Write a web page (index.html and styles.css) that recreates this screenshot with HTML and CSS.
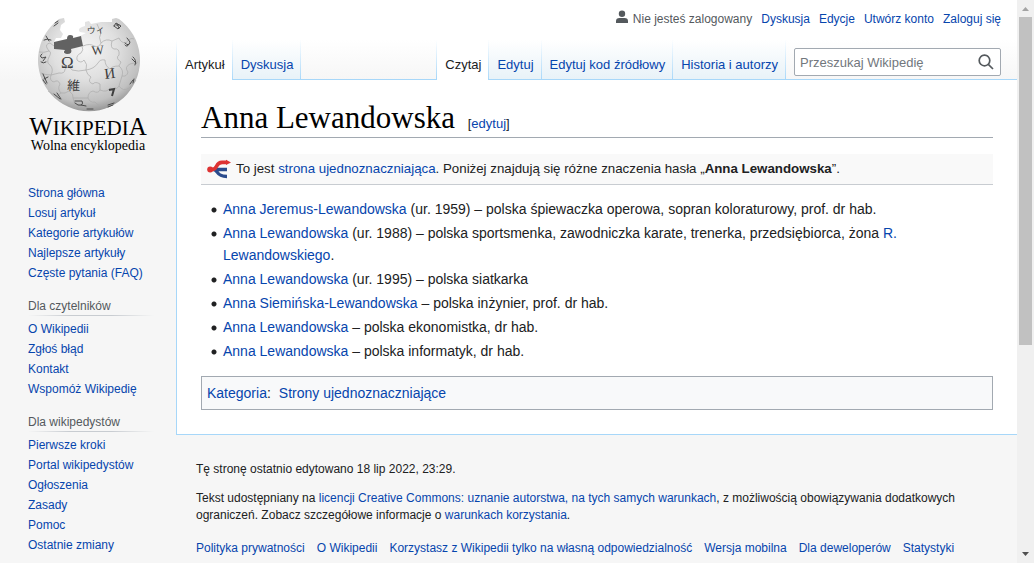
FILE: index.html
```html
<!DOCTYPE html>
<html lang="pl">
<head>
<meta charset="utf-8">
<meta name="viewport" content="width=device-width, initial-scale=1">
<title>Anna Lewandowska – Wikipedia, wolna encyklopedia</title>
<link rel="stylesheet" href="styles.css">
</head>
<body>
<div class="page">
  <aside class="sidebar">
    <a class="logo" href="#" aria-label="Strona główna">
      <svg width="160" height="160" viewBox="0 0 160 160" role="img" aria-label="Wikipedia – Wolna encyklopedia">
        <defs>
          <radialGradient id="globe" cx="0.46" cy="0.34" r="0.7">
            <stop offset="0" stop-color="#f4f4f4"/>
            <stop offset="0.45" stop-color="#e0e0e0"/>
            <stop offset="0.8" stop-color="#c0c0c0"/>
            <stop offset="1" stop-color="#8a8a8a"/>
          </radialGradient>
        </defs>
        <path fill="url(#globe)" d="M59 19L64 18L65 22L61 25L60 30L63 34L61 38L56 38L54 42L54 49L65 50Q61 53 66 54Q73 54 71 49L82 46L82 39L80 36L86 33L80 32Q77 29 82 27L85 26L85 22L89 21L91 24L101 22L112 22L112 19L116 18L119 19A51 51 0 1 1 59 19Z"/>
        <path fill="#626262" d="M54 42L67 39Q67 35 70 35Q74 35 73 38L81 36L83 46L71 49Q73 54 67 54Q62 53 65 50L54 49Z"/>
        <g fill="none" stroke="#aaa" stroke-width="0.7">
          <path d="M54 46L50 43Q45 44 47 48L49 51Q44 53 39 52M82 46Q84 50 81 53Q76 55 77 60Q81 64 84 60Q88 64 86 70M86 70Q78 72 72 70Q69 65 65 69Q65 74 59 73L51 75Q54 69 50 65Q46 63 49 57Q52 52 49 51"/>
          <path d="M83 46Q90 43 94 46Q99 48 101 43Q106 38 112 41L119 38Q121 43 126 43Q130 37 134 39M101 43Q98 37 101 33L97 24M112 41Q110 48 114 49Q120 48 119 55Q115 58 121 62L119 66Q112 66 110 69Q105 66 105 60Q100 59 98 63Q94 69 86 70"/>
          <path d="M51 75Q45 75 41 73M51 75Q49 81 54 82Q58 79 60 84Q57 89 61 93Q65 94 69 91Q74 94 73 98L88 98Q88 92 93 91Q98 94 100 90L100 84Q95 81 93 84Q87 82 91 77Q87 75 86 70"/>
          <path d="M100 90Q107 93 110 88Q116 91 119 86L122 76Q127 77 128 72Q124 67 130 64L138 62M119 66Q124 70 122 76M119 86Q123 92 129 88Q134 84 136 80M73 98Q76 104 73 108M88 98Q90 103 95 102Q99 107 104 105L111 102L119 98M61 93Q58 97 54 95L48 91"/>
        </g>
        <g fill="#3f3f3f" class="logo-glyphs">
          <text x="61" y="68" font-size="17">Ω</text>
          <text x="92" y="55" font-size="13" transform="rotate(-5 92 55)">W</text>
          <text x="105" y="79" font-size="15" transform="rotate(-7 105 79)">И</text>
          <text x="67" y="90" font-size="13" transform="rotate(2 67 90)">維</text>
          <text x="87" y="34" font-size="9" transform="rotate(-4 87 34)">ウィ</text>
        </g>
        <path fill="none" stroke="#3f3f3f" stroke-width="2" d="M109 90L114 89L112 96"/>
        <g fill="none" stroke="#4a4a4a" stroke-width="1" stroke-linecap="round">
          <path d="M55 23L58 21M54 26L58 23M46 36L49 41M44 40Q47 38 51 40M42 54Q39 56 42 58L46 57L43 61M41 62Q43 64 46 62M43 74L47 83M44 79L48 77M43 80L46 84M54 94L60 99M57 93L61 99M75 101L82 101Q84 106 78 105L75 103M81 105L86 106M114 26L116 23L121 26L118 29L114 26M117 24L119 28M116 25L119 25M125 43Q129 47 130 42L127 38M129 44Q127 48 125 45M133 57Q137 60 135 65M132 59L136 63M133 80L130 84M134 79L133 83M108 105L114 103M108 107L113 105M87 109L93 109"/>
        </g>
        <g class="logo-words" text-anchor="middle">
          <text x="88" y="135" font-size="21"><tspan font-size="25">W</tspan>IKIPEDI<tspan font-size="25">A</tspan></text>
          <text x="88" y="150" font-size="14">Wolna encyklopedia</text>
        </g>
      </svg>
    </a>
    <nav class="menu" aria-label="Nawigacja">
      <ul>
        <li><a href="#">Strona główna</a></li>
        <li><a href="#">Losuj artykuł</a></li>
        <li><a href="#">Kategorie artykułów</a></li>
        <li><a href="#">Najlepsze artykuły</a></li>
        <li><a href="#">Częste pytania (FAQ)</a></li>
      </ul>
    </nav>
    <nav class="menu" aria-labelledby="readers">
      <h3 id="readers">Dla czytelników</h3>
      <ul>
        <li><a href="#">O Wikipedii</a></li>
        <li><a href="#">Zgłoś błąd</a></li>
        <li><a href="#">Kontakt</a></li>
        <li><a href="#">Wspomóż Wikipedię</a></li>
      </ul>
    </nav>
    <nav class="menu" aria-labelledby="editors">
      <h3 id="editors">Dla wikipedystów</h3>
      <ul>
        <li><a href="#">Pierwsze kroki</a></li>
        <li><a href="#">Portal wikipedystów</a></li>
        <li><a href="#">Ogłoszenia</a></li>
        <li><a href="#">Zasady</a></li>
        <li><a href="#">Pomoc</a></li>
        <li><a href="#">Ostatnie zmiany</a></li>
      </ul>
    </nav>
  </aside>

  <div class="main">
    <header class="header">
      <ul class="personal">
        <li class="anon">
          <svg width="12" height="16" viewBox="0 0 12 16" aria-hidden="true"><circle cx="6" cy="4.7" r="3.2" fill="#54595d"/><path d="M0 14V12Q0 9 3.5 9H8.5Q12 9 12 12V14Z" fill="#54595d"/></svg>
          <span>Nie jesteś zalogowany</span>
        </li>
        <li><a href="#">Dyskusja</a></li>
        <li><a href="#">Edycje</a></li>
        <li><a href="#">Utwórz konto</a></li>
        <li><a href="#">Zaloguj się</a></li>
      </ul>
      <div class="bar">
        <nav class="tabs" aria-label="Przestrzenie nazw">
          <a class="tab active" href="#">Artykuł</a>
          <a class="tab" href="#">Dyskusja</a>
        </nav>
        <nav class="tabs views" aria-label="Widok">
          <a class="tab active" href="#">Czytaj</a>
          <a class="tab" href="#">Edytuj</a>
          <a class="tab" href="#">Edytuj kod źródłowy</a>
          <a class="tab" href="#">Historia i autorzy</a>
        </nav>
        <form class="search">
          <input type="search" aria-label="Przeszukaj Wikipedię" placeholder="Przeszukaj Wikipedię">
          <button type="button" aria-label="Szukaj">
            <svg width="16" height="16" viewBox="0 0 16 16" aria-hidden="true"><g fill="none" stroke="#54595d" stroke-width="1.7"><circle cx="6.5" cy="6.5" r="5.3"/><path d="M10.3 10.3L15 15"/></g></svg>
          </button>
        </form>
      </div>
    </header>

    <main class="content">
      <h1>Anna Lewandowska <span class="edit">[<a href="#">edytuj</a>]</span></h1>
      <div class="notice">
        <svg width="24" height="20" viewBox="0 0 24 20" aria-hidden="true">
          <path d="M6 10.5H20M7 10.5C11 11 9 17.5 20 17.5" fill="none" stroke="#2a4b8d" stroke-width="3.3"/>
          <path d="M3 10.5H5C11 10.5 8 3.6 15 3.4H20" fill="none" stroke="#d33" stroke-width="3.6"/>
          <path d="M19 0.7L24 3.4L19 6Z" fill="#d33"/>
          <circle cx="3.2" cy="10.4" r="3" fill="#d33"/>
        </svg>
        <p>To jest <a href="#">strona ujednoznaczniająca</a>. Poniżej znajdują się różne znaczenia hasła „<b>Anna Lewandowska</b>”.</p>
      </div>
      <ul class="entries">
        <li><a href="#">Anna Jeremus-Lewandowska</a> (ur. 1959) – polska śpiewaczka operowa, sopran koloraturowy, prof. dr hab.</li>
        <li><a href="#">Anna Lewandowska</a> (ur. 1988) – polska sportsmenka, zawodniczka karate, trenerka, przedsiębiorca, żona <a href="#">R. Lewandowskiego</a>.</li>
        <li><a href="#">Anna Lewandowska</a> (ur. 1995) – polska siatkarka</li>
        <li><a href="#">Anna Siemińska-Lewandowska</a> – polska inżynier, prof. dr hab.</li>
        <li><a href="#">Anna Lewandowska</a> – polska ekonomistka, dr hab.</li>
        <li><a href="#">Anna Lewandowska</a> – polska informatyk, dr hab.</li>
      </ul>
      <div class="category"><span><a href="#">Kategoria</a>:</span><a href="#">Strony ujednoznaczniające</a></div>
    </main>

    <footer class="footer">
      <p>Tę stronę ostatnio edytowano 18 lip 2022, 23:29.</p>
      <p>Tekst udostępniany na <a href="#">licencji Creative Commons: uznanie autorstwa, na tych samych warunkach</a>, z możliwością obowiązywania dodatkowych ograniczeń. Zobacz szczegółowe informacje o <a href="#">warunkach korzystania</a>.</p>
      <ul>
        <li><a href="#">Polityka prywatności</a></li>
        <li><a href="#">O Wikipedii</a></li>
        <li><a href="#">Korzystasz z Wikipedii tylko na własną odpowiedzialność</a></li>
        <li><a href="#">Wersja mobilna</a></li>
        <li><a href="#">Dla deweloperów</a></li>
        <li><a href="#">Statystyki</a></li>
      </ul>
    </footer>
  </div>
</div>
<div class="scrollbar" aria-hidden="true">
  <svg width="17" height="17" viewBox="0 0 17 17"><path d="M5 11L8.5 7L12 11Z" fill="#a3a3a3"/></svg>
  <div class="track"><div class="thumb"></div></div>
  <svg width="17" height="17" viewBox="0 0 17 17"><path d="M5 6L8.5 10L12 6Z" fill="#505050"/></svg>
</div>
</body>
</html>
```
FILE: styles.css
```css
* { box-sizing: border-box; }

body {
  margin: 0;
  height: 100vh;
  display: flex;
  overflow: hidden;
  background: #f6f6f6;
  color: #202122;
  font-family: "Liberation Sans", Arial, sans-serif;
  font-size: 14px;
  line-height: 22px;
}

a { color: #0645ad; text-decoration: none; }
a:hover { text-decoration: underline; }
ul { margin: 0; padding: 0; list-style: none; }
p { margin: 0; }
svg { display: block; flex: none; }

.page {
  flex: 1;
  min-width: 0;
  display: grid;
  grid-template-columns: 176px minmax(0, 1fr);
  overflow: auto;
  scrollbar-width: none;
  background: linear-gradient(#fff 50%, #f6f6f6) top / 100% 80px no-repeat;
}

/* Sidebar */
.sidebar { font-size: 12px; line-height: 20px; }
.logo { display: block; margin-bottom: 23px; }
.logo-glyphs { font-family: "Liberation Serif", "Noto Sans CJK JP", serif; }
.logo-words { font-family: "Liberation Serif", serif; fill: #000; }
.menu { padding: 0 22px 13px 28px; }
.menu h3 {
  margin: 0 0 3px;
  font-size: 12px;
  font-weight: 400;
  color: #54595d;
  background: linear-gradient(to right, #f6f6f6, #c8ccd1 33%, #c8ccd1 66%, #f6f6f6) bottom / 100% 1px no-repeat;
}

/* Header */
.header { height: 79px; display: flex; flex-direction: column; justify-content: space-between; }
.personal {
  display: flex;
  justify-content: flex-end;
  gap: 9px;
  padding: 9px 16px 0 0;
  font-size: 12px;
  line-height: 20px;
}
.anon { display: flex; gap: 5px; color: #54595d; }
.bar {
  display: flex;
  height: 39px;
  padding-right: 16px;
}
.tabs { display: flex; position: relative; font-size: 13px; line-height: 20px; }
.tabs::before {
  content: "";
  width: 1px;
  background: linear-gradient(#fff, #a7d7f9);
}
.views { margin-left: auto; }
.tab {
  padding: 15px 7px 0 8px;
  border-right: 1px solid;
  border-image: linear-gradient(#fff, #a7d7f9) 1;
  background: linear-gradient(#fff, #e8f2f8);
}
.tab.active { color: #202122; background: #fff; margin-bottom: -1px; }
.search {
  display: flex;
  align-items: center;
  width: 207px;
  height: 28px;
  margin: 8px 0 0 8px;
  padding: 0 6px 0 5px;
  background: #fff;
  border: 1px solid #a2a9b1;
  border-radius: 2px;
}
.search input {
  flex: 1;
  min-width: 0;
  border: 0;
  padding: 0;
  background: none;
  outline: 0;
  font: 13px "Liberation Sans", Arial, sans-serif;
  color: #202122;
}
.search input::placeholder { color: #72777d; opacity: 1; }
.search button { border: 0; padding: 0; background: none; }

/* Article */
.content {
  padding: 19px 24px 24px;
  background: #fff;
  border: solid #a7d7f9;
  border-width: 1px 0 1px 1px;
}
h1 {
  margin: 0 0 16px;
  border-bottom: 1px solid #a2a9b1;
  font: 31px/38px "Liberation Serif", serif;
  color: #000;
}
.edit { margin-left: 5px; font: 13px/20px "Liberation Sans", Arial, sans-serif; color: #202122; }
.notice {
  display: flex;
  align-items: center;
  gap: 5px;
  padding: 4px 6px;
  background: #f9f9f9;
  border-bottom: 1px solid #c8ccd1;
  font-size: 95%;
}
.entries { margin: 13px 0 14px; }
.entries li {
  margin-bottom: 2px;
  padding-left: 22px;
  background: radial-gradient(circle, #202122 2px, transparent 3px) 10px 9px / 6px 6px no-repeat;
}
.category {
  display: flex;
  gap: 8px;
  padding: 5px;
  background: #f8f9fa;
  border: 1px solid #a2a9b1;
}

/* Footer */
.footer { padding: 26px 20px 0; font-size: 12px; line-height: 17px; }
.footer p { margin-bottom: 12px; }
.footer ul { display: flex; flex-wrap: wrap; column-gap: 12px; padding-top: 4px; }

/* Scrollbar */
.scrollbar { flex: none; display: flex; flex-direction: column; width: 17px; background: #f0f0f0; }
.track { flex: 1; padding: 0 2px; }
.thumb { height: 62%; background: #c1c1c1; }
```
